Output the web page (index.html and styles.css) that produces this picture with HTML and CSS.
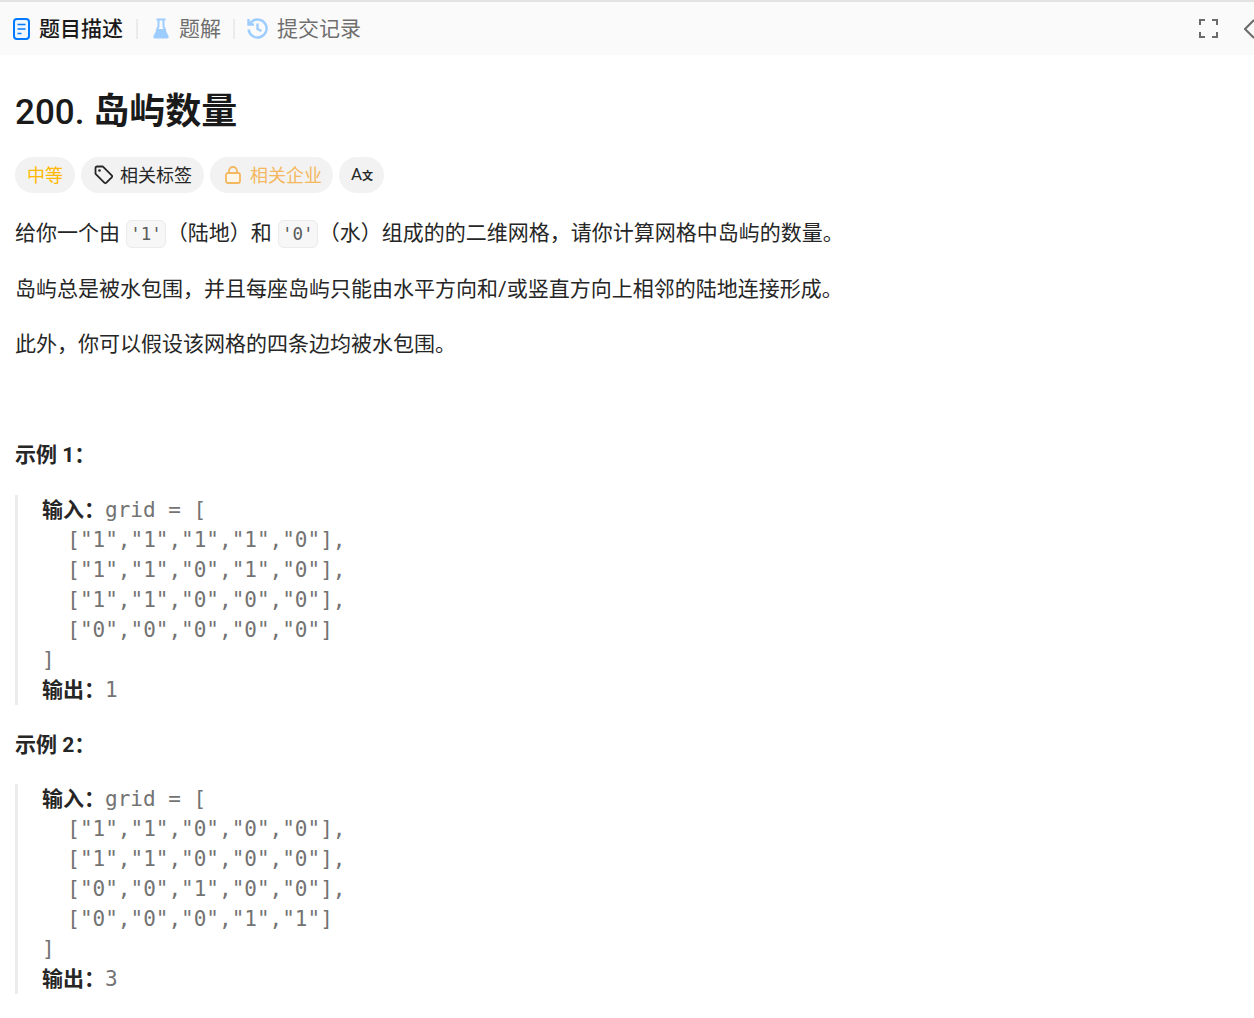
FILE: index.html
```html
<!DOCTYPE html>
<html lang="zh-CN">
<head>
<meta charset="utf-8">
<title>200. 岛屿数量</title>
<link rel="stylesheet" href="styles.css">
</head>
<body>
<header class="tabs">
  <div class="tab tab-active">
    <svg class="tab-icon" width="17" height="22" viewBox="0 0 17 22"><rect x="1" y="1" width="15" height="20" rx="3" fill="#eef6ff" stroke="#007aff" stroke-width="2"/><path d="M4.500 6.500h8M4.500 11h8M4.500 15.500h4" stroke="#007aff" stroke-width="1.700" fill="none"/></svg>
    <span class="tab-text">题目描述</span>
  </div>
  <i class="sep"></i>
  <div class="tab">
    <svg class="tab-icon" width="20" height="21" viewBox="0 0 20 21"><path d="M6.500 1.500h9" stroke="#9dcdff" stroke-width="2" fill="none"/><path d="M8.500 2v6.500L6.500 13M13.500 2v6.500L15.500 13" stroke="#9dcdff" stroke-width="2" fill="none"/><path d="M7 11h8l3.500 7c.6 1.300-.1 2.500-1.500 2.500H5c-1.400 0-2.100-1.200-1.500-2.500z" fill="#9dcdff"/></svg>
    <span class="tab-text">题解</span>
  </div>
  <i class="sep"></i>
  <div class="tab">
    <svg class="tab-icon" width="21" height="21" viewBox="1.500 1.500 21 21"><path d="M3.100 13A9 9 0 1 0 6 5.300L3 8M3 2.500V8h5.500M12 7v5.500l4 2" fill="none" stroke="#9dcdff" stroke-width="2.400"/></svg>
    <span class="tab-text">提交记录</span>
  </div>
  <div class="tab-tools">
    <svg width="19" height="19" viewBox="0 0 19 19"><path d="M1 6V1h5M13 1h5v5M18 13v5h-5M6 18H1v-5" fill="none" stroke="#6b6b6b" stroke-width="2"/></svg>
    <svg class="chev" width="10" height="20" viewBox="0 0 10 20"><path d="M10 1 1 10l9 9" fill="none" stroke="#6b6b6b" stroke-width="2"/></svg>
  </div>
</header>
<main class="content">
  <h1 class="title"><span class="title-num">200.</span> 岛屿数量</h1>
  <div class="pills">
    <span class="pill pill-level"><span class="pill-text">中等</span></span>
    <span class="pill pill-tag">
      <svg width="20" height="20" viewBox="-1 0 20 20"><path d="M1.500 3v5.500a1 1 0 0 0 .3.700l8.500 8.500a1.500 1.500 0 0 0 2.100 0l5.300-5.300a1.500 1.500 0 0 0 0-2.100L9.200 1.800A1 1 0 0 0 8.500 1.500H3A1.500 1.500 0 0 0 1.500 3z" fill="none" stroke="#262626" stroke-width="1.800"/><circle cx="5.500" cy="5.500" r="1.300" fill="#262626"/></svg>
      <span class="pill-text">相关标签</span>
    </span>
    <span class="pill pill-locked">
      <svg width="16" height="18" viewBox="0 0 16 18"><rect x="1" y="7" width="14" height="10" rx="2" fill="#fff6e8" stroke="#f4b860" stroke-width="1.800"/><path d="M4 7V5a4 4 0 0 1 8 0v2" fill="none" stroke="#f4b860" stroke-width="1.800"/></svg>
      <span class="pill-text">相关企业</span>
    </span>
    <span class="pill pill-lang"><span class="lang-a">A</span><span class="lang-zh">文</span></span>
  </div>
  <p class="para">给你一个由 <code>'1'</code>（陆地）和 <code>'0'</code>（水）组成的的二维网格，请你计算网格中岛屿的数量。</p>
  <p class="para">岛屿总是被水包围，并且每座岛屿只能由水平方向和/或竖直方向上相邻的陆地连接形成。</p>
  <p class="para">此外，你可以假设该网格的四条边均被水包围。</p>
  <p class="para">&nbsp;</p>
  <p class="para"><strong>示例 1：</strong></p>
  <pre class="sample"><strong>输入：</strong>grid = [
  ["1","1","1","1","0"],
  ["1","1","0","1","0"],
  ["1","1","0","0","0"],
  ["0","0","0","0","0"]
]
<strong>输出：</strong>1</pre>
  <p class="para"><strong>示例 2：</strong></p>
  <pre class="sample sample-next"><strong>输入：</strong>grid = [
  ["1","1","0","0","0"],
  ["1","1","0","0","0"],
  ["0","0","1","0","0"],
  ["0","0","0","1","1"]
]
<strong>输出：</strong>3</pre>
</main>
</body>
</html>
```
FILE: styles.css
```css
* { box-sizing: border-box; }
html, body { margin: 0; padding: 0; background: #fff; }
body {
  font-family: Roboto, "Noto Sans CJK SC", sans-serif;
  color: #262626;
  font-size: 21px;
  line-height: 31.5px;
  overflow: hidden;
}
.tabs {
  height: 55px;
  border-top: 2px solid #e3e3e3;
  background: #fafafa;
  display: flex;
  align-items: center;
  padding: 0 0 0 13px;
  gap: 12px;
}
.tab {
  display: flex;
  align-items: center;
  gap: 9px;
  color: #6f6f6f;
  font-size: 21px;
}
.tab-text { padding-top: 2px; }
.tab-active { color: #1a1a1a; font-weight: 500; margin-right: 1px; }
.sep { width: 2px; height: 20px; background: #ebebeb; }
.tab-tools {
  margin-left: auto;
  display: flex;
  align-items: center;
  gap: 26px;
}
.content { padding: 0 15px; }
.title {
  margin: 0;
  padding-top: 35px;
  font-size: 36px;
  line-height: 45px;
  font-weight: 700;
  color: #1a1a1a;
}
.title-num { font-size: 35px; font-weight: 500; }
.pills {
  display: flex;
  gap: 6px;
  margin: 22px 0 24px;
}
.pill {
  height: 36px;
  padding: 0 12px;
  border-radius: 18px;
  background: #f2f2f2;
  display: inline-flex;
  align-items: center;
  font-size: 18px;
  color: #262626;
}
.pill-text { padding-top: 1px; }
.pill-tag { gap: 7px; }
.pill-level { color: #ffb800; }
.pill-locked { color: #f4b860; gap: 9px; padding: 0 11px 0 15px; }
.pill-lang { padding: 0 11px 0 12px; }
.lang-a { font-size: 17px; }
.lang-zh { font-size: 11px; font-weight: 700; padding-top: 3px; }
.para { margin: 0 0 23px; padding-top: 1px; }
.para code {
  font-family: "DejaVu Sans Mono", monospace;
  font-size: 17.500px;
  line-height: 1;
  color: #5c5c5c;
  background: #f7f7f7;
  border: 1px solid #ebebeb;
  border-radius: 6px;
  padding: 3px 3.500px;
  margin: 0 0.500px;
}
.sample {
  margin: 0.500px 0 24px;
  border-left: 3px solid #ececec;
  padding-left: 24px;
  font-family: "DejaVu Sans Mono", "Noto Sans CJK SC", monospace;
  font-size: 21px;
  line-height: 30px;
  color: #737373;
  white-space: pre;
}
.sample-next { margin-top: -0.500px; }
.sample strong {
  font-family: Roboto, "Noto Sans CJK SC", sans-serif;
  line-height: 0;
  color: #262626;
  font-weight: 700;
}
```
